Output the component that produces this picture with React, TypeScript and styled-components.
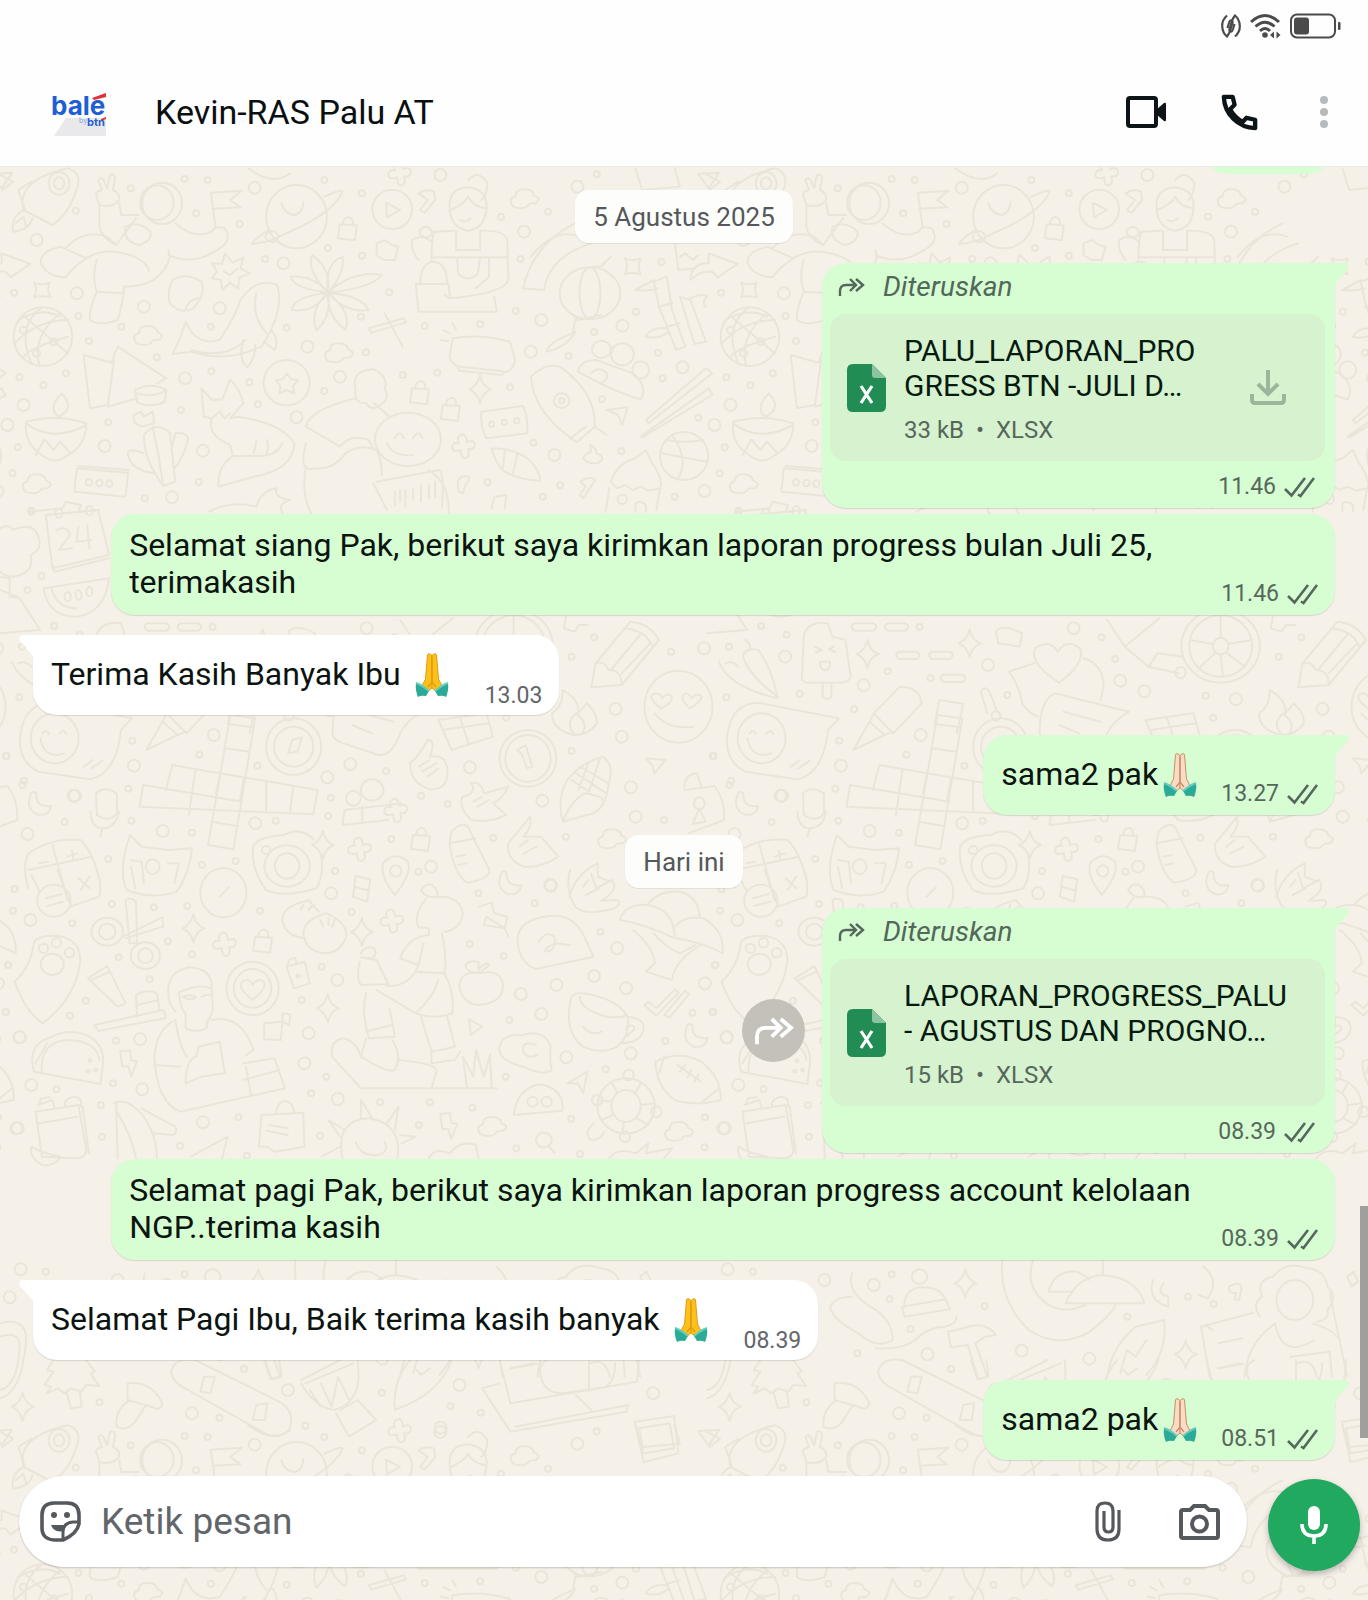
import React from "react";
import styled, { createGlobalStyle, css } from "styled-components";

const GlobalStyle = createGlobalStyle`
  * { box-sizing: border-box; }
  body { margin: 0; background: #f5f1e9; font-family: Roboto, "Noto Sans", sans-serif; color: #0b1410; }
  button { border: 0; padding: 0; background: none; color: inherit; display: grid; place-items: center; cursor: pointer; }
  svg { display: block; flex: none; }
`;

/* ---------- wallpaper ---------- */

type Stamp = "cloud" | "sparkle" | "lock" | "bolt" | "moon" | "cross";

const STAMPS: Record<Stamp, string> = {
  cloud: "M-13 8Q-18 0-10-2Q-10-10 0-9Q8-8 8-3Q17 0 10 5Q3 4 2 8Q-5 12-13 8Z",
  sparkle: "M0-14Q2-3 11 0Q2 3 0 14Q-3 3-11 0Q-3-3 0-14Z",
  lock: "M-8-5L9-4L7 11L-10 9ZM-5-5Q-4-13 2-12Q6-10 5-4",
  bolt: "M-8-12L2-13L3-3L9-2L3 13L0 3L-6 3Z",
  moon: "M-8-11Q-15 5-1 11Q10 12 12 2Q-4 4-3-11Q-6-13-8-11Z",
  cross: "M-3-11Q2-13 3-4Q11-7 11-1Q10 4 4 3Q7 11 1 12Q-3 12-3 4Q-11 7-12 1Q-11-4-5-3Q-8-9-3-11Z",
};

interface Sheet {
  x: number;
  y: number;
  sx: number;
  paths: string[];
  rings: number[][];
  dots: number[][];
  stamps: [Stamp, number, number][];
}

const SY = 1 / 3;

const SHEETS: Sheet[] = [
  {
    x: 0,
    y: 160,
    sx: 0.523,
    paths: [
      "M0 45L25 65L5 90M45 150Q30 60 130 25Q160 40 145 95Q130 165 100 195ZM48 150L35 90L60 65M45 150Q20 170 25 215Q55 210 62 175M30 190L45 170L50 200",
      "M185 110Q180 95 195 90L188 60Q192 50 198 60L205 85L210 45Q220 40 220 55L216 90Q230 100 228 120Q215 145 190 135ZM190 135L190 200Q195 235 222 255L260 175M228 130L232 165L265 165",
      "M240 200Q265 180 288 215Q290 245 265 255Q235 245 240 200M222 255L205 230Q160 205 125 265M115 260Q75 275 78 310Q90 350 125 352Q140 320 165 295L115 260M165 295Q190 270 220 275Q280 290 285 335",
      "M185 300Q175 350 185 395Q170 450 172 480Q190 500 225 480Q235 430 237 385M185 395L237 400M237 380Q310 380 325 290L322 270M335 190Q370 240 405 215Q410 195 430 205Q445 240 420 265Q370 320 322 285M412 200L403 98L462 92L440 120L460 142L406 146",
      "M620 110Q655 85 655 95Q640 150 575 200L520 240M515 210Q490 230 482 252Q500 250 520 240M538 130Q545 165 565 165Q580 155 580 125M738 128L765 150L740 172ZM800 100Q815 85 830 95L832 120L812 158L803 150L818 120Z",
      "M860 150Q855 85 895 82Q935 90 930 150Q925 210 893 212Q862 200 860 150M862 150Q890 130 895 110Q905 140 930 145M895 60Q915 25 932 70Q930 110 920 120M880 180Q890 190 900 175",
      "M868 212L830 215Q825 240 825 300M918 212Q965 210 970 240L972 360Q965 400 860 415L850 405M872 212L872 270L918 270L918 212M874 292L918 292L914 340Q895 370 876 340ZM825 292L872 292M918 292L972 292M910 385L935 350L935 292",
      "M860 410L858 372L795 372L800 455L950 455L945 410M803 372Q805 305 830 305Q855 310 855 372M800 300Q785 270 788 240Q805 220 825 245M803 210Q815 190 825 210Q828 230 815 232Q800 228 803 210M720 250L735 240L750 255L762 260L755 300L735 300L720 285Z",
      "M1100 190Q1020 250 1000 385L1040 390Q1050 290 1130 250M1015 290Q1060 200 1110 230M1128 322L1150 318L1168 290M1095 462L1105 480L1150 465M1100 480L1095 520Q1050 545 1045 575Q1085 560 1100 515",
      "M1215 25L1228 90L1300 80M1290 25L1300 80M1335 42L1375 38L1355 85ZM1195 295Q1210 305 1225 295Q1218 320 1225 343Q1210 335 1195 343Q1203 320 1195 295M65 368Q80 378 95 368Q88 390 97 412Q80 405 65 412Q73 390 65 368",
      "M1320 360Q1320 310 1355 310L1355 280L1410 312L1372 352L1362 335Q1340 330 1320 360M1290 240L1297 330L1330 325M1300 290L1310 280L1325 300L1335 285",
      "M1250 365L1275 350L1285 450L1310 560L1293 570L1260 440ZM1300 410L1320 420L1350 545L1328 552ZM1258 440L1285 430M1275 500L1300 490M1215 390L1250 360M1215 390Q1240 395 1258 385M1235 530Q1245 500 1275 505M1235 530Q1260 540 1278 515M1320 415Q1340 400 1352 408Q1340 430 1350 440",
      "M35 480Q80 440 115 470M28 550Q70 480 130 480M45 590Q60 560 130 530M80 442Q30 500 60 610M115 460Q60 530 75 617M50 475L130 580",
      "M405 310L425 312L430 280L445 308L465 292L460 325L478 340L458 352L455 385L440 368L425 390L422 360L405 355L415 335ZM428 335L440 345L455 325M330 360Q355 335 385 365Q395 400 370 445Q345 465 325 430Q318 400 330 360M385 415Q360 415 355 450",
      "M355 485Q375 560 420 540Q450 470 460 420Q490 350 530 375Q545 450 500 560Q430 610 365 575L330 582Q340 550 345 530ZM465 540Q455 600 473 622Q490 590 488 555M505 545L525 570Q535 540 518 510M365 570Q430 600 470 540M490 400Q480 470 510 520",
      "M627 398Q585 330 597 285Q635 330 627 398Q620 310 655 290Q660 340 627 398Q675 330 730 345Q710 385 627 398Q690 405 705 450Q660 460 627 398Q675 460 660 508Q625 470 627 398Q635 470 605 512Q590 450 627 398Q600 460 558 450Q560 410 627 398Q560 385 556 350Q600 345 627 398",
      "M705 505L772 475L776 487L710 518ZM735 460L770 560M865 535Q920 520 975 545L985 600Q980 630 970 635L880 620Q860 610 860 590ZM875 622L878 632L960 645L965 635M865 490L872 510M848 510L860 520M842 540L857 543",
      "M160 585L172 745L206 735M160 585L213 608L225 560L318 655L300 670M206 740L218 600M206 740L262 715M258 690Q290 665 318 690L315 725Q290 745 262 728ZM262 700Q290 715 317 692",
      "M50 785Q110 760 165 790Q165 860 125 890Q105 915 80 885Q45 850 50 785M50 790Q100 850 165 795M118 700Q90 745 112 770Q145 745 118 700M68 885L85 838L102 870L115 845L135 880",
      "M275 825Q300 780 325 820L335 965L312 978Q275 900 275 825M292 800Q305 890 312 978M275 880Q240 860 245 885Q250 930 295 940M328 870L335 820Q355 815 360 835Q350 900 333 925M255 765L270 755L275 770L292 755L295 790L270 800L258 790ZM147 925L245 938L240 1010L142 995ZM150 918L247 930",
      "M385 685L405 720L425 718L440 658Q460 690 465 730L440 775L455 770Q540 790 563 850Q560 930 485 950L418 980Q415 920 445 888L440 855Q395 825 405 775L390 770ZM445 888L500 888Q530 885 540 850M485 880Q490 850 490 840M510 880Q515 850 510 840M405 775L420 755L430 775L440 760",
      "M548 640L557 658L570 660L560 678L562 700L548 690L535 700L536 678L528 660L541 658Z",
      "M680 690Q670 630 715 628Q745 650 735 690Q745 700 735 725Q710 760 700 730Q675 730 680 690M680 715Q590 750 585 800L650 860Q670 820 705 840L715 870M585 850Q570 940 600 925Q640 930 660 880Q690 850 720 870Q730 900 730 945M585 920Q575 1000 595 1060M715 730L745 770",
      "M755 835Q765 805 772 835M790 835Q800 805 808 835M740 850Q750 890 790 885M820 930Q860 970 858 1060M720 965L840 930Q850 940 845 1040M714 970L740 1050M755 1035L755 995M765 1025L765 990M775 1040L775 990M790 1020L790 985M805 1025L805 975M820 1015L820 975M832 1010L832 965",
      "M920 755L1000 738Q1010 770 1008 820L930 835Q918 800 920 755M1015 650Q1050 600 1075 625Q1140 700 1137 800L1103 847Q1020 760 1015 650M1137 800L1160 825M1090 835L1120 800M1160 750L1200 742L1190 795L1182 765Z",
      "M1105 635Q1110 600 1140 600L1210 640Q1240 680 1225 718Q1180 700 1105 635M1130 640Q1145 615 1160 640Q1165 660 1145 670M1235 780L1350 625L1362 640L1240 790ZM1225 830L1355 685L1362 705L1228 832Z",
      "M1265 880L1352 905M1285 825Q1320 900 1295 958M1345 840Q1310 850 1275 840M940 865Q990 865 1015 905Q1035 940 1032 962Q990 960 960 930Q945 900 940 865M965 870L962 925M990 880L980 945",
      "M1168 965Q1180 910 1215 895L1235 870L1245 905Q1270 960 1262 985L1255 1050M1168 965L1180 985L1195 975L1210 990L1225 980L1240 992L1262 985M1165 985L1158 1055M1215 1055L1215 1030Q1225 1020 1235 1035L1235 1055M475 25Q520 80 555 40",
      "M1115 895Q1120 880 1130 875L1128 855Q1140 860 1140 880Q1160 890 1145 908Q1125 915 1115 895M875 965Q880 945 895 950Q900 960 890 975L885 1000L877 995ZM1110 965Q1130 945 1138 960L1115 1015L1108 1005L1120 980ZM945 1010L968 1005L965 1045M945 1010L940 1045M55 1055L120 1045L125 1025L155 1035L150 1055L188 1050M400 1055Q440 1020 490 1040Q500 990 530 985Q520 1010 555 1020Q530 1030 540 1060",
    ],
    rings: [
      [113, 70, 20, 34], [113, 70, 10, 18], [310, 130, 38, 62], [300, 128, 32, 52], [567, 170, 58, 95], [520, 230, 12, 16],
      [750, 148, 38, 59], [1128, 400, 58, 78], [1128, 400, 20, 78], [82, 530, 56, 88], [45, 510, 7, 10], [70, 580, 7, 10],
      [103, 545, 7, 10], [170, 967, 6, 10], [190, 969, 6, 10], [209, 971, 6, 10], [548, 668, 44, 68], [780, 838, 63, 80],
      [940, 793, 5, 8], [964, 787, 5, 8], [988, 782, 5, 8], [1074, 722, 15, 22], [1074, 722, 5, 8], [1150, 568, 18, 26],
      [1190, 583, 22, 33], [1225, 630, 16, 26], [1308, 888, 46, 72], [1190, 1018, 9, 14],
    ],
    dots: [
      [353, 57], [397, 60], [487, 83, 1], [620, 60], [692, 100], [375, 160], [145, 152], [458, 192], [70, 240, 1], [147, 400, 1],
      [27, 398], [150, 468], [232, 500], [275, 440, 1], [420, 445, 1], [507, 297], [542, 310, 1], [627, 264], [692, 287],
      [744, 397], [690, 470], [812, 498], [918, 493], [548, 503], [588, 560, 1], [700, 577], [403, 500], [170, 543], [300, 592],
      [354, 655, 1], [404, 634], [37, 652], [126, 640], [83, 676], [45, 735, 1], [477, 667], [650, 650, 1], [770, 645],
      [836, 638], [620, 693], [493, 733], [567, 772, 1], [346, 750], [207, 787], [200, 858, 1], [388, 872, 1], [34, 862],
      [14, 795, 1], [24, 940], [380, 966], [277, 1015], [329, 1012, 1], [975, 682], [1035, 480, 1], [986, 452], [995, 297],
      [958, 170], [1002, 215, 1], [1048, 155], [1104, 80, 1], [1141, 43], [1265, 305], [1216, 455], [1190, 497, 1],
      [1136, 516], [1087, 588], [1015, 575, 1], [1258, 578], [1305, 622, 1], [1267, 655], [1151, 718], [1335, 773],
      [1188, 873], [1060, 885, 1], [1020, 848], [932, 967], [1071, 976], [1038, 1010], [1290, 1010], [1347, 993, 1], [60, 1052],
      [250, 85], [842, 45, 1],
    ],
    stamps: [
      ["lock", 665, 208], ["cloud", 1005, 115], ["cloud", 285, 525], ["cloud", 650, 577], ["cloud", 72, 970], ["lock", 803, 700],
      ["lock", 862, 750], ["sparkle", 918, 688], ["cross", 887, 858], ["cross", 765, 40],
    ],
  },
  {
    x: 0,
    y: 870,
    sx: 0.523,
    paths: [
      "M135 110L190 80Q195 40 185 0M110 0L135 105M60 15L76 65M88 85L118 72M90 108L120 95M420 80L438 52M680 18L708 28L702 95L675 80ZM678 50L706 62",
      "M1090 0Q1080 60 1100 110Q1120 140 1175 115Q1190 100 1180 90L1150 92Q1185 60 1170 30L1140 55L1130 10M1115 50L1125 30M1120 75L1145 55",
      "M1185 150Q1195 100 1240 105Q1290 120 1290 205Q1230 160 1185 150M1240 100Q1260 60 1300 65Q1335 80 1338 140M1290 170Q1310 135 1345 145Q1385 180 1382 250Q1340 215 1292 205M1210 180Q1250 230 1252 280L1235 305L1285 330Q1290 270 1340 225M1250 190Q1270 230 1300 250L1330 225",
      "M240 90Q252 80 260 95L262 220L248 220ZM235 200L310 142L312 170L240 205M65 215Q80 190 120 200Q160 220 152 290Q140 390 82 460Q50 430 28 335Q60 290 65 215",
      "M540 150Q540 110 580 95L590 90L610 125M540 150Q545 200 585 205M580 185Q585 145 625 130Q665 160 662 200Q650 250 620 250Q580 240 580 185M612 150L618 170M628 145L628 165M640 150L635 170M575 120L580 105M590 120L598 105",
      "M805 60Q820 25 835 60Q840 90 830 80Q815 85 805 60M815 85Q795 120 797 155L800 172L820 175L820 195M830 80Q880 75 885 130Q880 180 850 185M820 195Q780 200 765 265L800 285Q785 350 740 348M845 190Q855 260 850 310L795 305M800 285L810 220",
      "M690 250Q700 225 715 235Q722 250 712 265L690 262M688 275Q680 320 690 345L742 342L720 270L690 262M850 310Q870 370 865 430Q830 450 795 430L720 360M795 430Q830 380 838 330M700 370Q690 420 705 505L755 500L745 415M805 440L825 545L870 530L855 440M700 485L748 465",
      "M700 505L690 560Q740 610 755 600Q770 560 750 510M690 560Q680 510 655 505Q630 515 635 560L690 655L950 655M825 545L825 580L870 570L880 545M760 570Q830 580 835 600L825 655M893 650L885 560L905 620L910 540L925 620L937 555L940 650",
      "M915 110L940 98L945 130L970 140L965 175L972 200M965 175L925 165L930 140ZM990 220Q985 150 1050 138Q1100 130 1120 210L1135 260L1025 297Q995 280 990 220M1030 215Q1045 180 1060 200Q1065 240 1045 245Q1035 240 1060 220L1090 225",
      "M168 325L205 288L240 400L225 410ZM175 330L210 305M180 465L312 420Q320 440 315 445L188 483ZM262 440L260 375Q280 355 300 370L305 420M262 405L303 390",
      "M325 400Q310 310 360 292Q405 295 405 350L407 420Q400 450 395 460M345 365Q380 340 405 355M342 365Q345 420 355 430L355 475Q375 490 395 475L397 450M325 400L335 425M350 380Q365 370 375 382Q365 395 350 380M385 380Q400 370 405 378",
      "M330 455Q300 480 295 560Q300 700 345 725L545 655L525 565L465 580M335 450Q345 540 358 560M405 450Q460 430 485 540L470 555M355 640Q355 570 375 560L380 530L420 515L430 610L385 620ZM470 590L480 675M465 630L535 600M295 585L345 590",
      "M483 390Q450 350 465 332Q478 325 483 345Q490 325 502 332Q515 350 483 390M548 290L583 275L592 340L562 355ZM550 290Q550 262 565 265L567 280",
      "M918 310Q880 300 878 350Q885 400 915 405Q960 400 962 350Q960 295 918 310M915 308L915 275Q890 270 890 290Q895 310 915 308M915 300Q930 270 935 285L918 308M505 460L540 455L537 510L505 508ZM540 430L555 433L553 465L540 455Z",
      "M1090 400Q1090 365 1115 370Q1180 385 1200 440Q1205 500 1180 530Q1150 555 1115 530Q1080 490 1090 400M1108 380Q1110 420 1160 440Q1190 445 1197 435M1200 440Q1235 445 1230 480Q1225 520 1185 520M1115 470Q1130 500 1150 485M1198 470Q1215 460 1212 480L1198 498Z",
      "M1232 405L1240 395L1255 415L1290 358L1298 368L1255 437ZM1270 435L1310 362L1318 372L1280 442ZM897 448L922 470L900 495ZM1085 640L1123 605L1115 670L1105 640Z",
      "M955 530Q960 490 1000 495Q1040 475 1053 530Q1050 570 1055 600Q1040 620 1000 590Q950 570 955 530M1025 525Q1000 510 1000 540Q1005 570 1028 555M65 605Q50 520 100 500Q130 475 165 495Q200 520 197 580L192 642ZM80 610Q75 520 125 510Q185 510 190 570M68 580L90 520",
      "M1253 575Q1300 540 1340 575Q1380 620 1378 690Q1330 710 1290 690Q1255 650 1253 575M1295 585L1340 635M1300 605L1310 585M1315 622L1322 600M1328 635L1335 615M1270 560L1260 610M1375 655L1340 700",
      "M1135 760Q1115 790 1130 810Q1150 810 1155 785M1170 640L1180 668M1225 640L1215 668M1252 700L1225 705M1240 765L1218 745M1190 790L1193 756M1150 750L1172 735M1145 690L1170 695M982 735Q990 650 1035 643Q1080 660 1075 722Z",
      "M68 725L150 705L165 840Q165 860 150 865L80 860ZM150 705L158 710L170 850M72 705L100 690L105 715M75 700L78 685L95 682M125 710Q120 690 140 680Q158 680 155 710M60 830Q80 850 115 860Q105 890 80 885Q55 860 60 830M75 760L148 740",
      "M218 700Q240 680 270 730Q300 790 300 865M222 695L225 865M270 715L335 770Q340 790 330 795L290 790M225 730Q250 790 260 865M500 735L580 728L582 830L525 845L510 830L495 830ZM528 730Q530 695 545 692Q560 695 563 728M515 765L550 775M510 782L550 795",
      "M655 865Q640 750 705 745Q770 760 760 865M690 745L690 690L712 745M740 760L762 710L755 780M765 795L795 800L768 820M660 780L628 750L650 800M650 830L615 860M680 815Q690 860 720 855Q745 850 735 815M1050 830L1060 848M365 860L435 800L425 865M820 865Q830 830 860 850Q880 810 910 825L915 865M1165 865Q1180 830 1215 850L1240 820L1235 850L1285 835L1270 865",
    ],
    rings: [
      [103, 92, 32, 48], [427, 68, 44, 74], [205, 185, 30, 42], [205, 185, 16, 24], [278, 257, 28, 40], [278, 257, 14, 22],
      [100, 283, 22, 32], [83, 235, 9, 14], [108, 218, 9, 14], [133, 248, 9, 14], [483, 355, 50, 80], [483, 355, 36, 58],
      [1197, 708, 55, 83], [1197, 708, 28, 48], [1202, 615, 10, 16], [1142, 690, 10, 16], [1255, 725, 10, 16], [1195, 800, 10, 16],
      [1018, 695, 10, 15], [1045, 695, 10, 15], [1040, 810, 15, 22], [172, 572, 3, 4], [183, 600, 3, 4], [168, 603, 3, 4], [570, 318, 3, 4],
    ],
    dots: [
      [28, 57], [25, 122], [58, 150, 1], [138, 160], [214, 102], [294, 112], [358, 108], [321, 214], [367, 253], [227, 262],
      [16, 285], [286, 328], [164, 392], [12, 425], [134, 437], [38, 502, 1], [222, 512], [268, 508, 1], [216, 640],
      [272, 658, 1], [60, 645, 1], [108, 658], [193, 705], [34, 775, 1], [195, 800], [344, 827], [388, 757, 1], [456, 742],
      [497, 122], [633, 70, 1], [672, 126], [615, 290], [645, 330, 1], [577, 390], [590, 490, 1], [582, 580, 1], [624, 620],
      [595, 670], [646, 687, 1], [727, 697], [822, 697], [903, 713], [801, 765], [612, 797], [472, 857], [915, 70],
      [1052, 45, 1], [1022, 100], [1148, 185], [1180, 235, 1], [963, 258], [898, 222], [1064, 345, 1], [996, 372, 1],
      [1136, 318, 1], [1197, 355, 1], [1035, 432, 1], [974, 450], [1324, 428], [1362, 427], [1272, 513], [1206, 550, 1],
      [1083, 562, 1], [1158, 598], [967, 620], [1092, 746], [987, 835], [1109, 852], [1348, 742], [1383, 775, 1], [1389, 502, 1],
      [1348, 340, 1], [1367, 285], [1347, 832], [800, 5],
    ],
    stamps: [
      ["sparkle", 370, 175], ["cross", 430, 222], ["lock", 503, 215], ["cross", 750, 152], ["sparkle", 627, 415],
      ["bolt", 245, 580], ["bolt", 857, 768], ["cloud", 943, 768], ["cloud", 1300, 783], ["moon", 1330, 498], ["sparkle", 692, 186],
    ],
  },
  {
    x: 0,
    y: 500,
    sx: 0.4363,
    paths: [
      "M105 45L225 30L250 165L120 205ZM120 195L125 215L250 175M0 85Q20 70 30 90Q80 60 90 120Q95 150 70 165Q80 220 30 230Q10 230 0 215",
      "M130 90Q155 75 160 105L135 150L165 145M180 80L175 125L210 120M200 75L205 145",
      "M100 265L250 235M100 265Q110 350 175 350Q240 340 250 235M118 265Q130 325 175 325M0 230L22 235L22 290L45 295L92 390L0 400M0 270L40 290",
      "M528 645L585 655L535 1048L477 1035ZM515 745L572 755M380 870L395 795L728 870L718 943L320 920L328 855L555 905M448 808L433 945M505 820L495 880M610 845L610 930M672 860L665 935M560 830L550 900M485 965L542 978",
      "M660 760L670 720L692 712L682 755ZM1005 660L1115 640L1130 710L1035 750ZM1015 690L1120 670M1055 655L1075 735",
      "M980 720Q1000 720 985 770Q1030 760 1025 830Q1020 870 985 868Q940 850 940 790Q965 760 980 720M960 800L985 780M968 815L1000 790M980 830L1005 805",
      "M1290 570Q1330 600 1325 640L1345 610Q1370 640 1368 670Q1350 705 1315 705Q1265 690 1265 640Q1290 620 1290 570M1315 700Q1295 670 1320 640Q1350 670 1335 700M1185 750L1205 735L1220 800L1208 805L1195 760Z",
      "M1365 490L1445 365Q1490 370 1510 420L1425 555L1355 562ZM1365 490Q1385 480 1395 510Q1425 510 1425 555M1470 400L1400 510M1490 430L1425 520M1430 385Q1480 390 1495 440",
      "M1380 770Q1410 790 1395 850Q1390 920 1360 940L1290 965Q1275 900 1300 840Q1330 790 1380 770M1290 965Q1310 900 1340 880Q1385 890 1380 900M1330 800L1395 850M1320 820L1390 880M1310 840L1350 875M1350 785L1325 870M1375 775L1350 875M1480 775L1525 780L1500 820L1495 795Z",
      "M790 930L920 910M790 930L785 975L890 960M830 920L830 965M1080 850Q1100 840 1110 880L1165 860Q1150 900 1130 910L1160 945Q1120 970 1080 960Q1050 920 1060 890Q1095 880 1080 850M1085 905L1105 890M1095 920L1120 900",
      "M220 880Q240 855 268 880L268 940Q250 970 222 945ZM207 935Q210 985 235 985Q265 985 273 935M235 985L230 1010M298 1005L325 1040L385 1050L440 1045Q435 1120 405 1175Q350 1200 290 1170Q270 1110 298 1005M300 1080L325 1085L330 1150M385 1090L410 1090L400 1150M300 1100L310 1165",
      "M65 1060Q120 1010 185 1020Q215 1060 230 1150M65 1060Q50 1100 65 1165M120 1035L155 1200M65 1110L210 1070M90 1090L110 1085M155 1070L178 1060M165 1052L168 1078M180 1135L205 1165M205 1130L185 1170",
      "M580 1040Q590 1010 650 1005L670 995Q700 990 720 1020M735 1060Q745 1120 725 1165Q650 1195 610 1170Q575 1110 580 1040",
      "M1030 1030L1035 995Q1060 960 1075 985L1085 1015L1122 1110Q1120 1140 1070 1148Q1040 1120 1030 1030M1030 1030L1090 1015M1045 1070L1065 1065M1050 1095L1070 1090",
      "M1215 955Q1220 980 1200 1010L1240 1010L1280 1070Q1240 1105 1200 1100Q1160 1080 1165 1030Q1190 990 1215 950M1190 1040L1210 1020M1200 1060L1230 1040M905 1185Q870 1130 878 1090Q905 1050 935 1085Q945 1120 905 1185",
      "M1305 1190Q1320 1120 1370 1090L1370 1130L1400 1145M1500 640Q1530 690 1590 680M1515 625Q1480 590 1500 580Q1515 580 1517 595Q1530 575 1540 590Q1540 610 1515 625M1580 625Q1555 590 1570 580Q1580 580 1585 595Q1600 575 1608 590Q1605 610 1580 625",
    ],
    rings: [
      [135, 40, 8, 14], [205, 32, 8, 14], [155, 290, 7, 14], [180, 285, 7, 14], [205, 275, 7, 14], [673, 740, 63, 85],
      [673, 740, 45, 60], [1210, 775, 65, 85], [1210, 775, 52, 70], [853, 870, 26, 32], [810, 895, 17, 22], [350, 1100, 16, 22],
      [658, 1098, 52, 62], [658, 1098, 28, 38], [610, 1050, 10, 12], [907, 1113, 13, 17], [1555, 620, 78, 108],
    ],
    dots: [
      [72, 35], [95, 228], [63, 270], [124, 378], [303, 722], [307, 797, 1], [457, 764], [490, 705, 1], [590, 797], [750, 832, 1],
      [803, 793, 1], [885, 813], [1077, 802, 1], [965, 887], [1026, 912], [1243, 902, 1], [1310, 753], [1411, 627, 1],
      [1425, 710, 1], [1446, 862, 1], [1457, 950, 1], [1522, 960], [1310, 470], [1538, 455], [1362, 412], [172, 887, 1],
      [63, 1002, 1], [55, 842], [148, 966], [294, 866], [301, 962], [373, 993, 1], [440, 998], [585, 970, 1], [632, 962],
      [758, 893], [752, 948], [1131, 1013], [1297, 1010], [988, 1100, 1], [768, 1113], [540, 1083], [463, 1094], [248, 1077],
      [33, 1168], [897, 1017], [15, 768], [1263, 1157, 1],
    ],
    stamps: [
      ["cross", 908, 930], ["moon", 90, 912], ["sparkle", 740, 1035], ["cross", 825, 1047], ["lock", 965, 1020], ["cloud", 1405, 1015],
      ["moon", 1168, 1150],
    ],
  },
  {
    x: -23,
    y: 500,
    sx: 0.4363,
    paths: [
      "M80 485Q100 560 215 595Q200 500 170 450Q140 440 135 470Q150 530 215 590M95 490Q110 480 125 500M150 450Q155 430 140 420",
      "M270 540L275 400Q290 360 330 370L340 410L370 420L382 530Q380 545 360 548L280 548ZM318 550L318 590Q328 605 338 590L338 550M300 440L315 450L302 458M345 438L332 448L346 456M312 485L335 485Q335 510 322 512Q310 505 312 485",
      "M390 370h45q12 11 0 22h-45q-12-11 0-22M466 370h42q12 11 0 22h-42q-12-11 0-22M492 455h42q12 11 0 22h-42q-12-11 0-22M568 455h42q12 11 0 22h-42q-12-11 0-22M594 524h45q12 11 0 22h-45q-12-11 0-22",
      "M715 395Q730 370 775 400L770 440L720 430ZM860 548Q790 490 805 445Q840 415 857 455Q875 415 908 445Q920 490 860 548M745 515L802 490M745 515Q770 560 775 610Q790 640 812 650M915 475Q960 490 962 560L955 600M815 700Q815 600 850 580L1020 635Q985 660 970 700Q950 770 920 765L840 730Q815 720 815 700M870 635L955 665M860 675L905 700",
      "M680 575Q690 555 700 575L720 640M680 575L695 640M435 640L495 560Q540 560 545 610L480 700ZM435 640L425 665L460 705L480 695M425 665L388 750L460 705M585 600L640 612L625 700M585 600L575 672L632 682",
      "M100 700Q110 610 170 608L355 655L330 690Q320 820 260 838L140 815Q90 780 100 700M145 715Q155 780 200 760M150 700Q158 685 165 702M190 700Q198 685 205 702M245 800L265 780M262 805L288 782",
      "M1230 345L1230 413M1230 463L1235 530M1160 420L1213 432M1300 420L1247 432M1180 505L1218 458M1285 500L1243 458M970 360L1010 440L1090 355M1010 440L1065 500L1135 520M1065 500L1085 460L1145 470M1350 350L1345 385L1370 395L1380 375L1400 375",
      "M0 870L70 858Q95 900 92 960L10 1000M0 860Q5 820 30 820L40 862M35 925L50 965L20 972Z",
    ],
    rings: [
      [715, 648, 10, 14], [178, 715, 55, 75], [1230, 438, 90, 110], [1230, 438, 72, 92], [1230, 438, 18, 25], [1138, 518, 12, 17],
      [35, 910, 12, 18],
    ],
    dots: [
      [177, 378], [235, 404], [46, 445, 1], [103, 440], [232, 470, 1], [412, 556, 1], [467, 514], [540, 381], [565, 535],
      [697, 495, 1], [741, 585], [893, 385, 1], [957, 412], [988, 477], [1000, 542, 1], [1055, 574, 1], [265, 582], [97, 592],
      [390, 628], [1196, 587], [1265, 598, 1], [1213, 653], [66, 768], [221, 887, 1], [104, 855],
    ],
    stamps: [["sparkle", 421, 462], ["sparkle", 655, 430]],
  },
  {
    x: -23,
    y: 1260,
    sx: 0.4363,
    paths: [
      "M505 170L500 140L600 118L610 148ZM505 138Q505 90 540 82Q590 80 598 118M730 0Q720 120 790 210Q860 270 930 215Q985 160 990 130M800 0Q780 80 830 130Q870 165 920 135M835 95Q850 30 900 35Q925 50 930 60M835 95L890 95M875 130Q900 50 960 45Q1040 55 1055 130ZM960 0L960 45",
      "M385 40Q370 100 440 150Q480 190 478 240Q440 270 400 220Q340 180 335 140Q345 110 385 110M605 215L640 205Q690 180 715 225L690 230L668 250L695 350L675 357L650 255L612 262ZM530 240Q560 200 600 200Q625 190 625 170M530 240Q500 270 440 265",
      "M970 350Q980 260 1035 200L1100 180Q1110 270 1060 345M1000 340L1015 270L1035 290L1060 240M1185 200L1305 158M1185 200L1205 352M1225 250L1280 235M1225 325L1275 310M1200 200L1212 210",
      "M1320 170Q1300 130 1325 110Q1310 60 1350 50Q1380 0 1430 25Q1470 30 1475 80Q1500 110 1475 150Q1480 180 1450 185M1355 190Q1290 250 1285 350M1440 190Q1490 210 1495 230M1480 100L1520 350M1355 190Q1370 300 1445 240M1390 290L1480 275L1485 350M1405 310Q1440 290 1450 350",
      "M1075 60Q1060 120 1110 140L1110 110Q1080 100 1100 70M1190 20Q1230 60 1200 115L1180 105M1250 80Q1275 60 1278 85L1272 120L1262 118L1265 100Q1245 100 1250 80M1520 50L1535 35L1545 65L1530 80Z",
      "M175 300L160 330L175 335L155 375L170 380L160 400L185 385L200 400L215 385L240 395L250 375L280 378L260 340L270 335L250 300M205 395L215 445L240 440L235 390M345 370Q400 360 425 430Q420 455 400 440L345 420ZM350 420Q315 450 320 500Q340 515 360 490L385 440",
      "M445 340Q450 290 500 300L700 430Q730 460 715 510Q690 540 660 520L470 380Q450 365 445 340M520 350L545 350L535 400L512 395ZM640 435L665 430L660 480L632 480Z",
    ],
    rings: [[540, 50, 18, 22], [1400, 120, 42, 60]],
    dots: [
      [100, 28, 1], [158, 35], [322, 60, 1], [476, 43], [435, 75, 1], [471, 117], [689, 138], [558, 283, 1], [612, 327], [519, 207],
      [774, 272, 1], [929, 296, 1], [1155, 110], [1214, 132], [1016, 170], [397, 280],
    ],
    stamps: [["sparkle", 645, 70], ["sparkle", 1150, 283]],
  },
  {
    x: 0,
    y: 1260,
    sx: 0.4363,
    paths: [
      "M690 370Q720 440 765 450Q820 430 822 350L820 300M690 360L780 300M700 370L810 310M710 390L735 440M735 370L760 440L775 350L800 420M780 450L820 420L862 480L800 530L770 460M605 300L620 358L645 350L640 300",
      "M1145 300L1170 430L1460 365L1465 300M1105 385L1170 515L1435 455L1440 435L1180 500M1105 385L1145 370M1320 405L1355 450M1238 340Q1245 400 1290 400L1390 380Q1410 360 1410 310M1238 340Q1235 310 1255 300M1350 300L1350 395M1170 325L1230 312",
      "M905 450Q900 360 940 300M905 450Q1010 400 1035 300M955 330L965 345L985 325M1455 485L1545 468L1555 580L1475 607ZM1465 505L1535 490L1545 565L1475 580ZM0 190Q60 170 60 240Q50 400 0 415M0 230Q45 210 45 260Q40 380 0 390",
    ],
    rings: [],
    dots: [
      [660, 390, 1], [875, 398], [560, 327], [700, 497], [440, 460, 1], [503, 473], [228, 427], [1053, 375, 1], [1032, 438],
      [1102, 458], [1010, 503, 1], [1497, 400, 1], [22, 112, 1],
    ],
    stamps: [["sparkle", 52, 440]],
  },
];

const WallpaperSvg = styled.svg`
  position: absolute;
  inset: 0;
  width: 100%;
  height: 100%;
  z-index: 0;
  pointer-events: none;
  fill: none;
  stroke: #ebe5d9;
  stroke-width: 2;
  stroke-linejoin: round;
  stroke-linecap: round;
`;

const TILE_W = 707;
const TILE_H = 1257;

const Wallpaper = () => (
  <WallpaperSvg aria-hidden="true">
    <defs>
      <g id="doodles">
        {SHEETS.map((s, i) => (
          <g key={i} transform={`translate(${s.x} ${s.y})`}>
            <g transform={`scale(${s.sx} ${SY})`}>
              {s.paths.map((d, k) => (
                <path key={k} d={d} vectorEffect="non-scaling-stroke" />
              ))}
              {s.rings.map(([x, y, rx, ry], k) => (
                <ellipse key={k} cx={x} cy={y} rx={rx} ry={ry} vectorEffect="non-scaling-stroke" />
              ))}
            </g>
            {s.dots.map(([x, y, big], k) => (
              <circle key={k} cx={x * s.sx} cy={y * SY} r={big ? 6 : 3} />
            ))}
            {s.stamps.map(([name, x, y], k) => (
              <path key={k} d={STAMPS[name]} transform={`translate(${x * s.sx} ${y * SY})`} />
            ))}
          </g>
        ))}
      </g>
    </defs>
    {[0, 1, 2].map((row) =>
      [-1, 0, 1, 2, 3].map((col) => (
        <use key={`${row}:${col}`} href="#doodles" x={col * TILE_W} y={row * TILE_H} />
      ))
    )}
  </WallpaperSvg>
);

/* ---------- page ---------- */

const Page = styled.div`
  position: relative;
  display: flex;
  flex-direction: column;
  min-height: 100vh;
  background: #f5f1e9;
  overflow: hidden;
`;

const Top = styled.header`
  position: relative;
  z-index: 1;
  background: #fefefe;
  border-bottom: 1px solid #ebe9e6;
`;

const StatusBar = styled.div`
  display: flex;
  justify-content: flex-end;
  align-items: center;
  gap: 9px;
  height: 52px;
  padding-right: 27px;
  color: #4b4b4b;
`;

const TitleBar = styled.div`
  display: flex;
  align-items: center;
  height: 114px;
  padding: 6px 33px 0 50px;
`;

const Name = styled.h1`
  flex: 1;
  margin: 0 0 0 47px;
  font-size: 34px;
  line-height: 40px;
  font-weight: 400;
  color: #0a0f12;
`;

const HeaderActions = styled.div`
  display: flex;
  align-items: center;
  gap: 50px;
  color: #0d1418;
`;

const Chat = styled.main`
  position: relative;
  z-index: 1;
  flex: 1;
  display: flex;
  flex-direction: column;
  gap: 20px;
  padding: 0 33px 16px;
`;

const PreviousBubble = styled.div`
  align-self: flex-end;
  width: 110px;
  height: 7px;
  margin: 0 12px -4px 0;
  border-radius: 0 0 20px 20px / 0 0 6px 6px;
  background: #d7fdd2;
`;

const DateChip = styled.time`
  align-self: center;
  padding: 1px 18px 0;
  border-radius: 14px;
  background: #fdfdfb;
  box-shadow: 0 1px 1px rgba(0, 0, 0, 0.08);
  font-size: 26px;
  line-height: 52px;
  color: #54585b;
`;

const Group = styled.div`
  display: flex;
  flex-direction: column;
  gap: 6px;
`;

const Bubble = styled.article<{ $own?: boolean; $tail?: boolean }>`
  position: relative;
  max-width: 94%;
  border-radius: 24px;
  box-shadow: 0 1px 1px rgba(0, 0, 0, 0.12);
  align-self: ${(p) => (p.$own ? "flex-end" : "flex-start")};
  background: ${(p) => (p.$own ? "#d7fdd2" : "#ffffff")};
  ${(p) =>
    p.$tail &&
    css`
      ${p.$own ? "border-top-right-radius: 0;" : "border-top-left-radius: 0;"}
      &::after {
        content: "";
        position: absolute;
        top: 0;
        ${p.$own ? "right" : "left"}: -14px;
        width: 15px;
        height: 22px;
        background: inherit;
        border-radius: ${p.$own ? "0 4px 0 0" : "4px 0 0 0"};
        clip-path: ${p.$own
          ? "polygon(0 0, 88% 0, 100% 12%, 92% 28%, 0 100%)"
          : "polygon(12% 0, 100% 0, 100% 100%, 8% 28%, 0 12%)"};
      }
    `}
`;

const TextBubble = styled(Bubble)<{ $gap: number }>`
  display: flex;
  align-items: flex-end;
  gap: ${(p) => p.$gap}px;
  min-height: 80px;
  padding: 13px 17px 0 18px;
`;

const MessageText = styled.p<{ $long?: boolean }>`
  flex: 1;
  margin: 0;
  padding-bottom: ${(p) => (p.$long ? 14 : 12)}px;
  font-size: 32px;
  line-height: 37px;
`;

const ShortText = styled(MessageText)`
  display: flex;
  align-items: center;
  align-self: center;
  padding-bottom: 14px;
  white-space: pre;
`;

const Stamp = styled.footer`
  display: flex;
  justify-content: flex-end;
  align-items: center;
  gap: 8px;
  padding-bottom: 6px;
  font-size: 23px;
  line-height: 30px;
  color: #56685c;
`;

const ReplyStamp = styled(Stamp)`
  padding-bottom: 4px;
  color: #62666a;
`;

const DocBubble = styled(Bubble)`
  width: 513px;
  height: 245px;
  padding: 6px 10px 0 8px;
`;

const Forwarded = styled.p`
  display: flex;
  align-items: center;
  gap: 18px;
  height: 36px;
  margin: 0 0 9px;
  padding-left: 8px;
  font-size: 28px;
  line-height: 36px;
  font-style: italic;
  color: #52685b;
`;

const FileCard = styled.a`
  display: flex;
  align-items: center;
  height: 147px;
  padding: 0 39px 0 17px;
  border-radius: 16px;
  background: #d6f2cf;
  color: inherit;
  text-decoration: none;
`;

const FileInfo = styled.div`
  flex: 1;
  margin-left: 18px;
  padding-top: 2px;
`;

const FileName = styled.div`
  font-size: 30px;
  line-height: 35px;
  color: #071a10;
  white-space: nowrap;
`;

const FileMeta = styled.div`
  margin-top: 12px;
  font-size: 24px;
  line-height: 30px;
  color: #56685c;
  white-space: pre;
`;

const DocStamp = styled(Stamp)`
  padding: 11px 10px 0 0;
`;

const DocRow = styled.div`
  display: flex;
  justify-content: flex-end;
  align-items: center;
  gap: 17px;
`;

const ForwardButton = styled.button`
  width: 63px;
  height: 63px;
  border-radius: 50%;
  background: #c4c1bb;
  color: #ffffff;
`;

const Scrollbar = styled.div`
  position: absolute;
  z-index: 2;
  right: 0;
  top: 1206px;
  width: 8px;
  height: 232px;
  background: #a09f9d;
`;

const Composer = styled.form`
  position: relative;
  z-index: 1;
  display: flex;
  align-items: flex-start;
  gap: 21px;
  padding: 0 8px 30px 19px;
`;

const InputBar = styled.div`
  flex: 1;
  display: flex;
  align-items: center;
  height: 91px;
  padding: 0 27px 0 21px;
  border-radius: 46px;
  background: #ffffff;
  box-shadow: 0 1px 2px rgba(0, 0, 0, 0.2);
  color: #55595d;
`;

const MessageInput = styled.input`
  flex: 1;
  min-width: 0;
  height: 46px;
  margin: 0 20px;
  padding: 0;
  border: 0;
  outline: 0;
  background: none;
  font: 400 37px/46px Roboto, "Noto Sans", sans-serif;
  color: #0b1410;
  &::placeholder { color: #62666a; opacity: 1; }
`;

const AttachButton = styled.button`
  margin-right: 58px;
`;

const MicButton = styled.button`
  width: 92px;
  height: 92px;
  margin-top: 3px;
  border-radius: 50%;
  background: #21a95f;
  color: #ffffff;
  box-shadow: 0 3px 6px rgba(0, 0, 0, 0.25);
`;

/* ---------- icons ---------- */

const Logo = () => (
  <svg width="58" height="60" viewBox="0 0 58 60" role="img" aria-label="bale by btn">
    <path d="M16 36H56V54H4Z" fill="#e9e9eb" />
    <text fontFamily="Inter, sans-serif" fontWeight="700" fontSize="26" fill="#1f5fd6">
      <tspan x="1" y="33">bale</tspan>
      <tspan x="29" y="41" fontSize="7" fontWeight="400" fill="#7ea3e0">by</tspan>
      <tspan x="37" y="44" fontSize="11">btn</tspan>
    </text>
    <path d="M42 16L56 11V15L44 18Z" fill="#e0303a" />
    <path d="M51 37L56 35V37L51 39Z" fill="#e0303a" />
  </svg>
);

const NfcIcon = () => (
  <svg width="20" height="24" viewBox="0 0 20 24" fill="none" stroke="currentColor" strokeWidth="2.200">
    <path d="M6 1.500Q1 6 1.200 12Q1.500 19 6 22.500Q8 20 9 17L11.500 9Q12 7 10.500 6.500Q9 6 8 9L6.500 14" />
    <path d="M14 22.500Q19 18 18.800 12Q18.500 5 14 1.500Q12 4 11 7L8.500 15Q8 17 9.500 17.500Q11 18 12 15L13.500 10" />
  </svg>
);

const WifiIcon = () => (
  <svg width="31" height="26" viewBox="0 0 31 26" fill="none" stroke="currentColor" strokeWidth="3">
    <path d="M1 9Q15-4 29 9M5.500 13.500Q15 5 24.500 13.500M10 18Q15 13 20 18" />
    <circle cx="15" cy="22" r="2.800" fill="currentColor" stroke="none" />
    <path d="M24 18.500V25.500L20 22ZM26.500 18.500V25.500L30.500 22Z" fill="currentColor" stroke="none" />
  </svg>
);

const BatteryIcon = () => (
  <svg width="51" height="26" viewBox="0 0 51 26">
    <rect x="1" y="1.500" width="44" height="23" rx="6" fill="none" stroke="currentColor" strokeWidth="2" />
    <rect x="4" y="4.500" width="15" height="17" rx="3" fill="currentColor" />
    <rect x="48" y="9" width="2.500" height="8" rx="1" fill="currentColor" />
  </svg>
);

const VideoIcon = () => (
  <svg width="40" height="34" viewBox="0 0 40 34">
    <rect x="2" y="3" width="28" height="28" rx="2" fill="none" stroke="currentColor" strokeWidth="4" />
    <path d="M30 15L38 8Q40 7 40 9V25Q40 27 38 26L30 19Z" fill="currentColor" />
  </svg>
);

const PhoneIcon = () => (
  <svg width="47" height="47" viewBox="0 0 24 24" fill="none" stroke="currentColor" strokeWidth="2.200" strokeLinejoin="round">
    <path d="M4 4H8.500L9.500 8L7.200 10.300Q9.500 14.500 13.700 16.800L15.500 14.700L20 15.700V20Q13.500 19.800 8.800 15.200Q4.200 10.500 4 4Z" />
  </svg>
);

const MoreIcon = () => (
  <svg width="22" height="34" viewBox="0 0 22 34" fill="#b7babc">
    <circle cx="11" cy="5" r="4" />
    <circle cx="11" cy="17" r="4" />
    <circle cx="11" cy="29" r="4" />
  </svg>
);

const ForwardIcon = ({ width, stroke }: { width: number; stroke: number }) => (
  <svg width={width} height={(width * 20) / 27} viewBox="0 0 27 20" fill="none" stroke="currentColor" strokeWidth={stroke}>
    <path d="M2 19V14Q2 8 8 8H18M12 2L18 8L12 14M18 2L25 8L18 14" />
  </svg>
);

const SheetIcon = () => (
  <svg width="39" height="48" viewBox="0 0 39 48">
    <path d="M6 0H25L39 14V42Q39 48 33 48H6Q0 48 0 42V6Q0 0 6 0Z" fill="#218c53" />
    <path d="M25 0L39 14H28Q25 14 25 11Z" fill="#8cc3a1" />
    <path d="M14 22L25 39M25 22L14 39" stroke="#ffffff" strokeWidth="3.200" fill="none" />
  </svg>
);

const DownloadIcon = () => (
  <svg width="36" height="35" viewBox="0 0 36 35" fill="none" stroke="#9ab79b" strokeWidth="4">
    <path d="M18 0V23M8 14L18 24L28 14M2 24V30Q2 33 5 33H31Q34 33 34 30V24" />
  </svg>
);

const TicksIcon = () => (
  <svg width="31" height="21" viewBox="0 0 31 21" fill="none" stroke="currentColor" strokeWidth="2.600">
    <path d="M1 12L7.500 18.500L21 1M14 17.500L16.500 19L30 1" />
  </svg>
);

const HandsSvg = styled.svg<{ $lead: number }>`
  margin-left: ${(p) => p.$lead}px;
`;

const HandsEmoji = ({ skin, edge, lead }: { skin: string; edge: string; lead: number }) => (
  <HandsSvg $lead={lead} width="34" height="44" viewBox="0 0 34 44" role="img" aria-label="folded hands">
    <path d="M12.500 2Q13 0 15 1Q17 2 17 3V35L12 39L7 33L10.500 26Z" fill={skin} stroke={edge} strokeWidth="1" />
    <path d="M21.500 2Q21 0 19 1Q17 2 17 3V35L22 39L27 33L23.500 26Z" fill={skin} stroke={edge} strokeWidth="1" />
    <path d="M17 4V29L13 34M17 29L21 34" stroke={edge} strokeWidth="1.400" fill="none" />
    <path d="M1 30Q7 31 14 38L11 43Q6 42 3 44Q0 37 1 30Z" fill="#2bab97" />
    <path d="M33 30Q27 31 20 38L23 43Q28 42 31 44Q34 37 33 30Z" fill="#2bab97" />
    <path d="M1 30Q7 32 14 38M33 30Q27 32 20 38" stroke="#63cdbb" strokeWidth="2" fill="none" />
  </HandsSvg>
);

const StickerIcon = () => (
  <svg width="41" height="41" viewBox="0 0 41 41" fill="none" stroke="currentColor" strokeWidth="3.600">
    <path d="M2 14Q2 2 14 2H27Q39 2 39 14V23Q37 33 23 39H16Q2 39 2 27Z" />
    <path d="M39 21H33Q23 22 23 31V39" strokeWidth="3" />
    <path d="M11 24H27L23 30Q14 32 11 24Z" fill="currentColor" stroke="none" />
    <circle cx="14" cy="14" r="3" fill="currentColor" stroke="none" />
    <circle cx="27" cy="14" r="3" fill="currentColor" stroke="none" />
  </svg>
);

const ClipIcon = () => (
  <svg width="26" height="41" viewBox="0 0 26 41" fill="none" stroke="currentColor" strokeWidth="3.200">
    <path d="M24 9V28Q24 39 13 39Q2 39 2 28V10Q2 2 10 2Q18 2 18 10V26Q18 31 13.500 31Q9 31 9 26V10" />
  </svg>
);

const CameraIcon = () => (
  <svg width="41" height="36" viewBox="0 0 41 36" fill="none" stroke="currentColor" strokeWidth="4">
    <path d="M4 6H11L15 2H26L30 6H37Q39 6 39 8V32Q39 34 37 34H4Q2 34 2 32V8Q2 6 4 6Z" />
    <circle cx="20.500" cy="20" r="7.500" />
  </svg>
);

const MicIcon = () => (
  <svg width="28" height="38" viewBox="0 0 28 38" fill="none" stroke="currentColor" strokeWidth="3.600">
    <rect x="8" y="0" width="12" height="24" rx="6" fill="currentColor" stroke="none" />
    <path d="M2 18Q2 30 14 30Q26 30 26 18M14 30V38" />
  </svg>
);

/* ---------- messages ---------- */

const FileMessage = ({ lines, size, time, download }: { lines: string[]; size: string; time: string; download?: boolean }) => (
  <DocBubble $own $tail>
    <Forwarded>
      <ForwardIcon width={27} stroke={2.4} />
      Diteruskan
    </Forwarded>
    <FileCard href="#file">
      <SheetIcon />
      <FileInfo>
        {lines.map((line) => (
          <FileName key={line}>{line}</FileName>
        ))}
        <FileMeta>{`${size}  •  XLSX`}</FileMeta>
      </FileInfo>
      {download && <DownloadIcon />}
    </FileCard>
    <DocStamp>
      {time}
      <TicksIcon />
    </DocStamp>
  </DocBubble>
);

const LongMessage = ({ text, time }: { text: string; time: string }) => (
  <TextBubble $own $gap={8}>
    <MessageText $long>{text}</MessageText>
    <Stamp>
      {time}
      <TicksIcon />
    </Stamp>
  </TextBubble>
);

const Reply = ({ text, time }: { text: string; time: string }) => (
  <TextBubble $tail $gap={36}>
    <ShortText>
      {text}
      <HandsEmoji skin="#fcc21b" edge="#e59a12" lead={14} />
    </ShortText>
    <ReplyStamp>{time}</ReplyStamp>
  </TextBubble>
);

const Thanks = ({ time }: { time: string }) => (
  <TextBubble $own $tail $gap={24}>
    <ShortText>
      sama2 pak
      <HandsEmoji skin="#fadcc4" edge="#c98f6b" lead={5} />
    </ShortText>
    <Stamp>
      {time}
      <TicksIcon />
    </Stamp>
  </TextBubble>
);

export default function App() {
  return (
    <Page>
      <GlobalStyle />
      <Wallpaper />
      <Top>
        <StatusBar>
          <NfcIcon />
          <WifiIcon />
          <BatteryIcon />
        </StatusBar>
        <TitleBar>
          <Logo />
          <Name>Kevin-RAS Palu AT</Name>
          <HeaderActions>
            <button aria-label="Panggilan video"><VideoIcon /></button>
            <button aria-label="Panggilan suara"><PhoneIcon /></button>
            <button aria-label="Opsi lainnya"><MoreIcon /></button>
          </HeaderActions>
        </TitleBar>
      </Top>
      <Chat>
        <PreviousBubble />
        <DateChip>5 Agustus 2025</DateChip>
        <Group>
          <FileMessage lines={["PALU_LAPORAN_PRO", "GRESS BTN -JULI D…"]} size="33 kB" time="11.46" download />
          <LongMessage
            text="Selamat siang Pak, berikut saya kirimkan laporan progress bulan Juli 25, terimakasih"
            time="11.46"
          />
        </Group>
        <Reply text="Terima Kasih Banyak Ibu" time="13.03" />
        <Thanks time="13.27" />
        <DateChip>Hari ini</DateChip>
        <Group>
          <DocRow>
            <ForwardButton aria-label="Teruskan"><ForwardIcon width={40} stroke={2.6} /></ForwardButton>
            <FileMessage lines={["LAPORAN_PROGRESS_PALU", "- AGUSTUS DAN PROGNO…"]} size="15 kB" time="08.39" />
          </DocRow>
          <LongMessage
            text="Selamat pagi Pak, berikut saya kirimkan laporan progress account kelolaan NGP..terima kasih"
            time="08.39"
          />
        </Group>
        <Reply text="Selamat Pagi Ibu, Baik terima kasih banyak" time="08.39" />
        <Thanks time="08.51" />
      </Chat>
      <Composer onSubmit={(e) => e.preventDefault()}>
        <InputBar>
          <button type="button" aria-label="Stiker"><StickerIcon /></button>
          <MessageInput aria-label="Ketik pesan" placeholder="Ketik pesan" />
          <AttachButton type="button" aria-label="Lampirkan"><ClipIcon /></AttachButton>
          <button type="button" aria-label="Kamera"><CameraIcon /></button>
        </InputBar>
        <MicButton type="button" aria-label="Rekam suara"><MicIcon /></MicButton>
      </Composer>
      <Scrollbar />
    </Page>
  );
}
